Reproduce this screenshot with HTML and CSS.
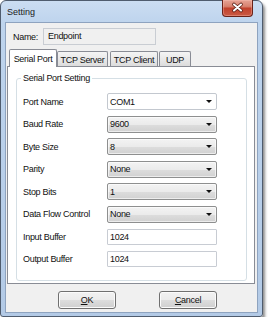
FILE: index.html
```html
<!DOCTYPE html>
<html>
<head>
<meta charset="utf-8">
<title>Setting</title>
<link rel="stylesheet" href="styles.css">
</head>
<body>
<div class="window">
  <div class="titlebar">
    <span class="title">Setting</span>
    <div class="close">
      <svg width="29" height="16" viewBox="0 0 29 16">
        <path d="M11 4.5 L18 10.5 M18 4.5 L11 10.5" stroke="#5a2118" stroke-width="3.6" stroke-linecap="round" fill="none"/>
        <path d="M11 4.5 L18 10.5 M18 4.5 L11 10.5" stroke="#ffffff" stroke-width="2" stroke-linecap="round" fill="none"/>
      </svg>
    </div>
  </div>
  <div class="client">
    <div class="name-row">
      <span class="name-label">Name:</span>
      <div class="name-box">Endpoint</div>
    </div>
    <div class="tabs">
      <div class="tab sel t1">Serial Port</div>
      <div class="tab t2">TCP Server</div>
      <div class="tab t3">TCP Client</div>
      <div class="tab t4">UDP</div>
    </div>
    <div class="panel">
      <fieldset class="group">
        <legend>Serial Port Setting</legend>
        <div class="grid">
          <span>Port Name</span><div class="combo edit"><span>COM1</span><i class="arrow"></i></div>
          <span>Baud Rate</span><div class="combo"><span>9600</span><i class="arrow"></i></div>
          <span>Byte Size</span><div class="combo"><span>8</span><i class="arrow"></i></div>
          <span>Parity</span><div class="combo"><span>None</span><i class="arrow"></i></div>
          <span>Stop Bits</span><div class="combo"><span>1</span><i class="arrow"></i></div>
          <span>Data Flow Control</span><div class="combo"><span>None</span><i class="arrow"></i></div>
          <span>Input Buffer</span><div class="text">1024</div>
          <span>Output Buffer</span><div class="text">1024</div>
        </div>
      </fieldset>
    </div>
    <div class="buttons">
      <button class="btn"><u>O</u>K</button>
      <button class="btn"><u>C</u>ancel</button>
    </div>
  </div>
</div>
</body>
</html>
```
FILE: styles.css
```css
* { box-sizing: border-box; }
html, body { margin: 0; padding: 0; background: #ffffff; }
body {
  font-family: "Liberation Sans", Arial, sans-serif;
  font-size: 9px;
  letter-spacing: -0.3px;
  color: #111111;
}
.window {
  width: 263px;
  height: 317px;
  border: 1px solid #4f5c6e;
  border-radius: 6px 6px 3px 3px;
  background: linear-gradient(180deg, #cbddf2 0, #bed4ed 22px, #b3cae6 100%);
  padding: 0 4px 3px 4px;
  box-shadow: 2px 3px 3px rgba(0, 0, 0, 0.45);
  display: flex;
  flex-direction: column;
}
.titlebar {
  height: 21px;
  flex: none;
  display: flex;
  align-items: center;
  padding-left: 2px;
}
.title { letter-spacing: 0; font-size: 9px; color: #1b1b1b; }
.close {
  margin-left: auto;
  margin-right: 5px;
  align-self: flex-start;
  margin-top: -1px;
  width: 31px;
  height: 17px;
  border: 1px solid #6a2219;
  border-top: none;
  border-radius: 0 0 4px 4px;
  background: linear-gradient(180deg, #e6a395 0, #d8826f 40%, #c2412c 52%, #c95a44 100%);
  display: flex;
  align-items: center;
  justify-content: center;
  box-shadow: inset 0 0 0 1px rgba(255, 200, 190, 0.35);
}
.close svg { display: block; }
.client {
  height: 291px;
  flex: none;
  border: 1px solid #8ea3bf;
  background: #f0f0f0;
  display: flex;
  flex-direction: column;
}
.name-row {
  margin-top: 5px;
  padding-left: 7px;
  height: 17px;
  display: flex;
  align-items: center;
  flex: none;
}
.name-label { width: 30px; }
.name-box {
  width: 113px;
  height: 17px;
  border: 1px solid #c9cdd3;
  background: #f0f0f0;
  padding-left: 4px;
  line-height: 15px;
}
.tabs {
  margin-top: 4px;
  height: 17px;
  flex: none;
  display: flex;
  align-items: flex-end;
  padding-left: 3px;
  position: relative;
  z-index: 1;
}
.tab {
  height: 15px;
  border: 1px solid #898c95;
  border-bottom: none;
  border-radius: 2px 2px 0 0;
  background: linear-gradient(180deg, #f4f4f4 0, #e9e9e9 50%, #dcdcdc 100%);
  display: flex;
  align-items: center;
  justify-content: center;
  padding-top: 1px;
}
.tab.sel {
  height: 18px;
  margin-bottom: -1px;
  background: #ffffff;
  padding-top: 0;
}
.t1 { width: 48px; }
.t2 { width: 51px; }
.t3 { width: 48px; margin-left: 2px; }
.t4 { width: 32px; margin-left: 1px; }
.panel {
  height: 218px;
  flex: none;
  margin: 0 2px 0 1px;
  border: 1px solid #898c95;
  background: #ffffff;
  padding: 6px 7px 1px 8px;
}
.group {
  margin: 0;
  border: 1px solid #d5dfe5;
  border-radius: 3px;
  padding: 9px 6px 12px 6px;
  min-width: 0;
}
.group legend {
  padding: 0 2px;
  margin-left: -2px;
  line-height: 11px;
  font-size: 9px;
}
.grid {
  display: grid;
  grid-template-columns: 84px 110px;
  grid-auto-rows: 17px;
  row-gap: 5.5px;
  align-items: center;
}
.combo {
  height: 17px;
  display: flex;
  align-items: center;
  justify-content: space-between;
  padding: 0 4px 0 2px;
  border: 1px solid #8e8f8f;
  border-radius: 2px;
  background: linear-gradient(180deg, #f3f3f3 0, #ebebeb 50%, #dddddd 51%, #d1d1d1 100%);
  box-shadow: inset 0 0 0 1px rgba(255, 255, 255, 0.6);
}
.combo.edit {
  background: #ffffff;
  border-color: #c3c8cf;
  box-shadow: none;
}
.arrow {
  width: 0;
  height: 0;
  border-left: 3px solid transparent;
  border-right: 3px solid transparent;
  border-top: 3px solid #111111;
}
.text {
  height: 16px;
  border: 1px solid #c8ccd3;
  border-radius: 1px;
  background: #ffffff;
  padding-left: 2px;
  line-height: 14px;
}
.buttons {
  margin-top: 7px;
  padding-left: 52px;
  display: flex;
  gap: 43px;
  flex: none;
}
.btn {
  width: 58px;
  height: 18px;
  padding: 0;
  border: 1px solid #707070;
  border-radius: 3px;
  background: linear-gradient(180deg, #f2f2f2 0, #ebebeb 50%, #dddddd 51%, #cfcfcf 100%);
  box-shadow: inset 0 0 0 1px #fbfbfb;
  font-family: inherit;
  font-size: 9px;
  letter-spacing: -0.3px;
  color: #111111;
}
```
